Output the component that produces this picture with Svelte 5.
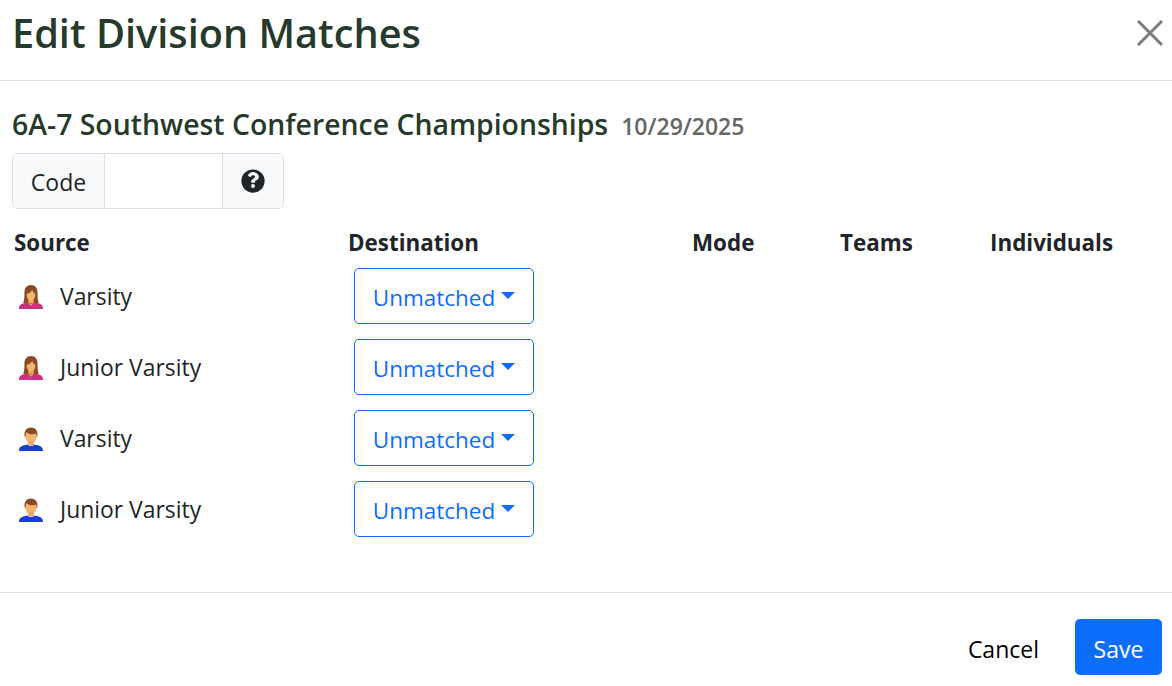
<script>
  const rows = [
    { gender: "f", name: "Varsity" },
    { gender: "f", name: "Junior Varsity" },
    { gender: "m", name: "Varsity" },
    { gender: "m", name: "Junior Varsity" }
  ];
</script>

<div class="modal">
  <header class="modal-header">
    <h1>Edit Division Matches</h1>
    <button class="close" aria-label="Close">
      <svg viewBox="0 0 26 26" width="26" height="26">
        <path d="M1 1L25 25M25 1L1 25" stroke="#7c7c7c" stroke-width="3" fill="none" />
      </svg>
    </button>
  </header>

  <div class="modal-body">
    <div class="title">
      <h2>6A-7 Southwest Conference Championships</h2>
      <small>10/29/2025</small>
    </div>

    <div class="input-group">
      <span class="addon code">Code</span>
      <input type="text" />
      <span class="addon help">
        <svg viewBox="0 0 512 512" width="24" height="24">
          <path fill="#212529" fill-rule="evenodd" d="M256 8a248 248 0 1 0 0 496 248 248 0 0 0 0-496zm0 397a42 42 0 1 1 0-84 42 42 0 0 1 0 84zm40-130v6c0 7-5 12-12 12h-56c-7 0-12-5-12-12v-12c0-40 30-56 53-69 20-11 32-19 32-33 0-19-24-32-44-32-25 0-36 12-53 33-4 5-12 6-17 2l-34-26c-5-4-6-11-3-16 27-40 62-62 115-62 56 0 116 44 116 101 0 76-85 77-85 108z" />
        </svg>
      </span>
    </div>

    <div class="table">
      <div class="row head">
        <div class="source">Source</div>
        <div>Destination</div>
        <div>Mode</div>
        <div>Teams</div>
        <div>Individuals</div>
      </div>
      {#each rows as row}
        <div class="row">
          <div class="source cell">
            <svg class="person" viewBox="1 1 22 22" width="24" height="24">
              {#if row.gender === "f"}
                <path fill="#8a4a26" d="M5 17c1-3 1-6 1-9 0-4 2-7 6-7s6 3 6 7c0 3 0 6 1 9l-3 2H8z" />
                <path fill="#e9a55c" d="M9.500 14h5v4h-5z" />
                <ellipse fill="#f2b56b" cx="12" cy="10" rx="4" ry="5.500" />
                <path fill="#8a4a26" d="M7.500 9c2 0 4-1 5.500-3.500 1 2 2 3.500 3.500 3.500V4h-9z" />
                <path fill="#d0317f" d="M1 23c0-4 2-5 7.500-6 1 2.500 6 2.500 7 0 5.500 1 7.500 2 7.500 6z" />
                <path fill="#eeaa5e" d="M9 17c1 2 5 2 6 0l-3 3z" />
              {:else}
                <ellipse fill="#f2b56b" cx="12" cy="10" rx="5" ry="6" />
                <path fill="#8a4a26" d="M6.500 11C5 5 7.500 1.500 12 1.500S19 5 17.500 11l-1-4c-2 1-7 1-8.500-1.500z" />
                <path fill="#e8a860" d="M9.500 14h5v4h-5z" />
                <path fill="#1a3fd6" d="M1 23c0-4 2.500-5 8-6 1 2 5 2 6 0 5.500 1 8 2 8 6z" />
              {/if}
            </svg>
            <span>{row.name}</span>
          </div>
          <div class="dest">
            <button class="dropdown">Unmatched<i class="caret"></i></button>
          </div>
          <div></div>
          <div></div>
          <div></div>
        </div>
      {/each}
    </div>
  </div>

  <footer class="modal-footer">
    <button class="btn-link">Cancel</button>
    <button class="btn-save">Save</button>
  </footer>
</div>

<style>
  :global(body) {
    background: #fff;
  }

  .modal {
    font-family: "Open Sans", "Noto Sans", sans-serif;
    font-size: 23px;
    color: #212529;
    width: 1172px;
    height: 686px;
    display: flex;
    flex-direction: column;
    overflow: hidden;
  }

  .modal-header {
    border-bottom: 1px solid #dee2e6;
    display: flex;
    align-items: center;
    justify-content: space-between;
    padding: 0 9px 14px 12px;
    height: 66px;
  }

  h1 {
    margin: 0;
    font-size: 39.7px;
    font-weight: 600;
    color: #263a2c;
  }

  .close {
    border: 0;
    background: none;
    padding: 0;
    display: flex;
  }

  .modal-body {
    flex: 1;
    padding: 24px 12px 0;
  }

  .title {
    display: flex;
    align-items: baseline;
    gap: 13px;
    height: 48px;
  }

  h2 {
    margin: 0;
    font-size: 28.4px;
    font-weight: 600;
    color: #263a2c;
  }

  small {
    font-size: 23px;
    font-weight: 600;
    color: #666;
  }

  .input-group {
    display: flex;
    width: 272px;
    height: 56px;
    box-sizing: border-box;
    border: 1px solid #dee2e6;
    border-radius: 5px;
    overflow: hidden;
  }

  .addon {
    background: #f8f9fa;
    display: flex;
    align-items: center;
    justify-content: center;
    box-sizing: border-box;
  }

  .code {
    width: 92px;
    padding-top: 1px;
    border-right: 1px solid #dee2e6;
  }

  .help {
    flex: 1;
    border-left: 1px solid #dee2e6;
  }

  input {
    width: 117px;
    border: 0;
    padding: 0;
    outline: none;
  }

  .table {
    margin-top: 14px;
  }

  .row {
    display: grid;
    grid-template-columns: 334px 344px 148px 150px 1fr;
    height: 71px;
    align-items: center;
    padding-left: 2px;
  }

  .row.head {
    height: 37px;
    padding-top: 1px;
    box-sizing: border-box;
    font-weight: 700;
    font-size: 22.4px;
  }

  .cell {
    display: flex;
    align-items: center;
    gap: 17px;
    padding-left: 5px;
    padding-top: 2px;
    font-size: 22.9px;
  }

  .person {
    flex: none;
  }

  .dest {
    padding-left: 6px;
  }

  .dropdown {
    font: inherit;
    font-size: 22.5px;
    color: #0d6efd;
    background: #fff;
    border: 1px solid #0d6efd;
    border-radius: 5px;
    width: 180px;
    height: 56px;
    padding: 3px 0 0;
    display: flex;
    align-items: center;
    justify-content: center;
    gap: 6px;
  }

  .caret {
    width: 0;
    height: 0;
    border-left: 7px solid transparent;
    border-right: 7px solid transparent;
    border-top: 7px solid #0d6efd;
    margin-bottom: 3px;
  }

  .modal-footer {
    height: 94px;
    border-top: 1px solid #dee2e6;
    display: flex;
    align-items: center;
    justify-content: flex-end;
    gap: 18px;
    padding: 15px 10px 0 0;
    box-sizing: border-box;
  }

  .btn-link {
    font: inherit;
    border: 0;
    background: none;
    color: #000;
    padding: 3px 18px 0;
  }

  .btn-save {
    font: inherit;
    width: 87px;
    height: 56px;
    border: 0;
    border-radius: 5px;
    background: #0d6efd;
    color: #fff;
    padding: 3px 0 0;
  }
</style>
